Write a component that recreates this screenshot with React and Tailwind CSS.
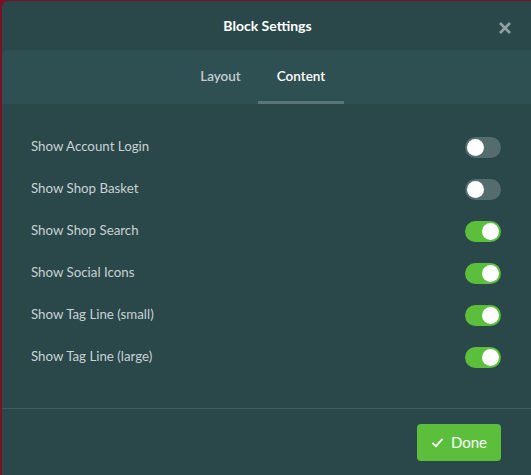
import React, { useState } from 'react';

const rows = [
  { label: 'Show Account Login', on: false },
  { label: 'Show Shop Basket', on: false },
  { label: 'Show Shop Search', on: true },
  { label: 'Show Social Icons', on: true },
  { label: 'Show Tag Line (small)', on: true },
  { label: 'Show Tag Line (large)', on: true },
];

const Toggle = ({ on, onClick }) => (
  <button
    onClick={onClick}
    className={`flex h-[21px] w-[36px] items-center rounded-full px-[2px] ${on ? 'justify-end bg-[#5bbf3b]' : 'justify-start bg-[#556c6f]'}`}
  >
    <span className="h-[17px] w-[17px] rounded-full bg-white" />
  </button>
);

const App = () => {
  const [items, setItems] = useState(rows);

  return (
    <div className="h-[475px] w-[531px] overflow-hidden bg-[#7a1126] pl-[2px] pt-[1px]" style={{ fontFamily: 'Lato, "Open Sans", sans-serif' }}>
      <div className="flex h-[480px] w-[535px] flex-col overflow-hidden rounded-md bg-[#2a474a]">
        <div className="relative flex h-[49px] items-center justify-center pr-[4px]">
          <span className="text-[14px] font-bold text-white">Block Settings</span>
          <svg className="absolute left-[496px] top-[20px]" width="14" height="14" viewBox="0 0 14 14">
            <path d="M2 2L12 12M12 2L2 12" stroke="#8fa3a5" strokeWidth="2.6" strokeLinecap="butt" />
          </svg>
        </div>

        <div className="flex h-[54px] rounded-t-md bg-[#2f5053] pl-[181px]">
          <div className="flex w-[75px] items-center justify-center pb-[2px] text-[13.5px] font-semibold text-[#c3cdce]">Layout</div>
          <div className="flex w-[86px] flex-col items-center">
            <div className="flex flex-1 items-center pt-[1px] text-[13.5px] font-semibold text-white">Content</div>
            <div className="h-[3px] w-full bg-[#5a7579]" />
          </div>
        </div>

        <div className="flex flex-col pb-[30px] pl-[29px] pr-[36px] pt-[22px]">
          {items.map((r, i) => (
            <div key={r.label} className="flex h-[42px] items-center justify-between">
              <span className="text-[13.3px] text-[#c9d3d4]">{r.label}</span>
              <Toggle
                on={r.on}
                onClick={() => setItems(items.map((x, j) => (j === i ? { ...x, on: !x.on } : x)))}
              />
            </div>
          ))}
        </div>

        <div className="h-px w-full bg-[#3c5c5f]" />

        <div className="flex justify-end pr-[36px] pt-[15px]">
          <button className="flex h-[37px] w-[84px] items-center justify-center gap-[7px] rounded bg-[#5bbf3b] text-[15px] text-white">
            <svg width="13" height="11" viewBox="0 0 13 11">
              <path d="M1.5 6L5 9.2L11.5 1.8" fill="none" stroke="white" strokeWidth="1.8" />
            </svg>
            Done
          </button>
        </div>
      </div>
    </div>
  );
};

export default App;
